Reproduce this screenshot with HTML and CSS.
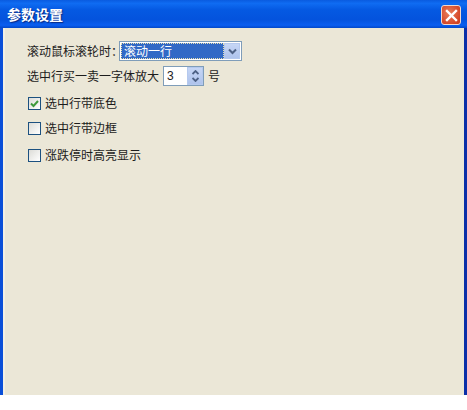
FILE: index.html
```html
<!DOCTYPE html>
<html lang="zh-CN">

<head>
    <meta charset="UTF-8">
    <title>参数设置</title>
    <link rel="stylesheet" href="styles.css">
</head>

<body>

    <div class="window">
        <div class="title-bar">
            <span class="title">参数设置</span>
            <div class="close-btn">
                <svg width="13" height="13" viewBox="0 0 13 13">
                    <path d="M2 2 L11 11 M11 2 L2 11" stroke="#fff" stroke-width="2.4" stroke-linecap="square" fill="none"/>
                </svg>
            </div>
        </div>

        <div class="content">
            <div class="row row-select">
                <span class="label">滚动鼠标滚轮时：</span>
                <div class="combo">
                    <div class="combo-value"><span class="combo-text">滚动一行</span></div>
                    <div class="arrow-btn combo-arrow">
                        <svg width="9" height="7" viewBox="0 0 9 7">
                            <path d="M1 1.5 L4.5 5 L8 1.5" stroke="#4d6185" stroke-width="2" fill="none"/>
                        </svg>
                    </div>
                </div>
            </div>

            <div class="row row-spin">
                <span class="label">选中行买一卖一字体放大</span>
                <div class="spinner">
                    <div class="spin-value">3</div>
                    <div class="arrow-btn spin-arrows">
                        <svg width="7" height="5" viewBox="0 0 7 5">
                            <path d="M0.5 4 L3.5 1 L6.5 4" stroke="#4d6185" stroke-width="1.8" fill="none"/>
                        </svg>
                        <svg width="7" height="5" viewBox="0 0 7 5">
                            <path d="M0.5 1 L3.5 4 L6.5 1" stroke="#4d6185" stroke-width="1.8" fill="none"/>
                        </svg>
                    </div>
                </div>
                <span class="label">号</span>
            </div>

            <div class="check-row check-first">
                <div class="check-box">
                    <svg width="11" height="11" viewBox="0 0 11 11">
                        <path d="M2 5.5 L4.5 8 L9 3" stroke="#3f9a3c" stroke-width="2" fill="none"/>
                    </svg>
                </div>
                <span class="label">选中行带底色</span>
            </div>
            <div class="check-row check-second">
                <div class="check-box"></div>
                <span class="label">选中行带边框</span>
            </div>
            <div class="check-row check-third">
                <div class="check-box"></div>
                <span class="label">涨跌停时高亮显示</span>
            </div>
        </div>
    </div>

</body>

</html>
```

FILE: styles.css
```css
html, body {
    margin: 0;
    padding: 0;
    background: #ffffff;
}

body {
    font-family: "Noto Sans CJK SC", "Liberation Sans", sans-serif;
    font-size: 12px;
    color: #1c1c1c;
}

.window {
    width: 467px;
    height: 395px;
    display: flex;
    flex-direction: column;
}

.title-bar {
    height: 28px;
    box-sizing: border-box;
    display: flex;
    align-items: center;
    justify-content: space-between;
    padding: 2px 6px 0 7px;
    background: linear-gradient(to bottom, #0a5be0 0%, #0f6cf2 12%, #0559e2 35%, #0453dd 70%, #0a5ef0 90%, #0348c8 100%);
}

.title {
    color: #ffffff;
    font-size: 14px;
    font-weight: bold;
    margin-top: -2px;
    text-shadow: 1px 1px 1px #0a2a80;
}

.close-btn {
    width: 20px;
    height: 20px;
    box-sizing: border-box;
    border: 1px solid #f2d8cc;
    border-radius: 3px;
    background: radial-gradient(circle at 40% 40%, #e8805c, #d6492a 70%, #c23a1c);
    display: flex;
    align-items: center;
    justify-content: center;
}

.content {
    flex: 1;
    background: #ebe7d7;
    border-left: 3px solid #0a4fd8;
    border-right: 3px solid #0a2fa8;
    padding: 13px 0 0 24px;
    box-shadow: inset 2px 0 0 #f3f0e4;
}

.row {
    display: flex;
    align-items: center;
}

.label {
    line-height: 16px;
    white-space: nowrap;
}

.row-select {
    height: 20px;
}

.row-select .label {
    width: 92px;
}

.combo {
    width: 123px;
    height: 20px;
    box-sizing: border-box;
    border: 1px solid #7f9db9;
    background: #ffffff;
    display: flex;
    padding: 1px;
}

.combo-value {
    flex: 1;
    background: #3169c6;
    border: 1px dotted #e8e0b0;
    display: flex;
    align-items: center;
    padding-left: 2px;
}

.combo-text {
    color: #ffffff;
    line-height: 14px;
}

.arrow-btn {
    background: linear-gradient(to bottom, #c6d6f5, #aec3ec);
    border: 1px solid #b5c9ee;
    box-sizing: border-box;
    display: flex;
    align-items: center;
    justify-content: center;
}

.combo-arrow {
    width: 16px;
}

.row-spin {
    margin-top: 5px;
    height: 20px;
}

.spinner {
    width: 41px;
    height: 20px;
    box-sizing: border-box;
    border: 1px solid #7f9db9;
    background: #ffffff;
    display: flex;
    margin: 0 4px 0 4px;
}

.spin-value {
    flex: 1;
    padding-left: 3px;
    line-height: 18px;
    font-family: "Liberation Sans", sans-serif;
}

.spin-arrows {
    width: 16px;
    flex-direction: column;
    gap: 2px;
}

.check-row {
    display: flex;
    align-items: center;
    height: 16px;
    padding-left: 1px;
}

.check-first {
    margin-top: 9px;
}

.check-second {
    margin-top: 9px;
}

.check-third {
    margin-top: 11px;
}

.check-box {
    width: 13px;
    height: 13px;
    box-sizing: border-box;
    border: 1px solid #1c5180;
    background: linear-gradient(135deg, #dcdcd7, #ffffff);
    margin-right: 4px;
    display: flex;
    align-items: center;
    justify-content: center;
}
```
